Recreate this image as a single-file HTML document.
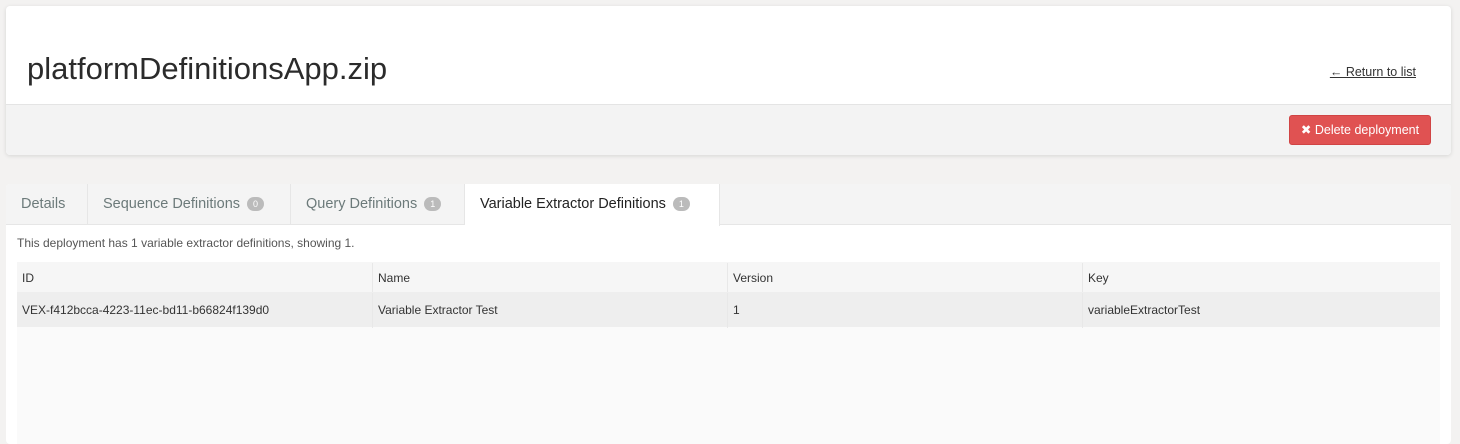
<!DOCTYPE html>
<html><head><style>
*{box-sizing:border-box;margin:0;padding:0}
body{width:1460px;height:427px;background:#f3f2f1;font-family:"Liberation Sans",sans-serif;position:relative;overflow:hidden;color:#333}
.card1{position:absolute;left:6px;top:6px;width:1445px;height:149px;background:#fff;border-radius:4px;box-shadow:0 1px 4px rgba(0,0,0,.12);overflow:hidden}
.title{position:absolute;left:21px;top:45px;font-size:31px;color:#2b2b2b;letter-spacing:0}
.ret{position:absolute;right:35px;top:59px;font-size:12.5px;color:#333;text-decoration:underline}
.bar{position:absolute;left:0;top:98px;width:100%;height:51px;background:#f3f3f3;border-top:1px solid #e4e4e4}
.btn{position:absolute;right:20px;top:10px;width:142px;height:30px;background:#e05252;border:1px solid #d04444;border-radius:3px;color:#fff;font-size:12.5px;line-height:28px;text-align:center}
.card2{position:absolute;left:6px;top:184px;width:1445px;height:260px;background:#fff;border-radius:4px;overflow:hidden}
.tabs{position:absolute;left:0;top:0;width:100%;height:41px;background:#f4f4f4;border-bottom:1px solid #e6e6e6}
.tab{position:absolute;top:0;height:41px;line-height:40px;font-size:14.5px;color:#6c7a7a;border-right:1px solid #e6e6e6;padding-left:15px}
.tab.a{background:#fff;color:#222;height:42px}
.b{display:inline-block;width:17px;height:14px;border-radius:7px;background:#bbb;color:#fff;font-size:9px;line-height:14px;text-align:center;vertical-align:middle;margin-left:7px}
.info{position:absolute;left:11px;top:52px;font-size:12px;color:#555}
.tbl{position:absolute;left:11px;top:78px;width:1423px;height:190px;background:#fafafa}
.row{position:absolute;left:0;width:100%;font-size:12px;color:#333}
.row div{position:absolute;top:1px;padding-left:5px;height:100%;border-left:1px solid #e8e8e8}
</style></head><body>
<div class="card1">
<div class="title">platformDefinitionsApp.zip</div>
<div class="ret">← Return to list</div>
<div class="bar"><div class="btn">✖ Delete deployment</div></div>
</div>
<div class="card2">
<div class="tabs">
<div class="tab" style="left:0;width:82px">Details</div>
<div class="tab" style="left:82px;width:203px">Sequence Definitions<span class="b">0</span></div>
<div class="tab" style="left:285px;width:174px">Query Definitions<span class="b">1</span></div>
<div class="tab a" style="left:459px;width:255px">Variable Extractor Definitions<span class="b">1</span></div>
</div>
<div class="info">This deployment has 1 variable extractor definitions, showing 1.</div>
<div class="tbl">
<div class="row" style="top:0;height:30px;line-height:30px;background:#f6f6f6">
<div style="left:0;border:none">ID</div><div style="left:355px">Name</div><div style="left:710px">Version</div><div style="left:1065px">Key</div></div>
<div class="row" style="top:30px;height:35px;line-height:35px;background:#eeeeee">
<div style="left:0;border:none">VEX-f412bcca-4223-11ec-bd11-b66824f139d0</div><div style="left:355px">Variable Extractor Test</div><div style="left:710px">1</div><div style="left:1065px">variableExtractorTest</div></div>
</div>
</div>
</body></html>
